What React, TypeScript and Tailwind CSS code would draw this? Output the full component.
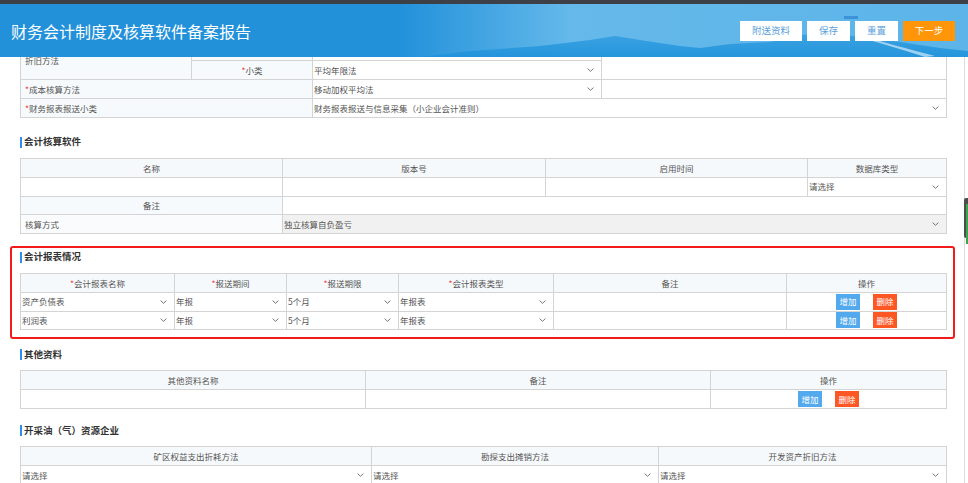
import React from "react";

const Chev = () => (
  <svg width="7" height="4" viewBox="0 0 7 4" className="shrink-0">
    <polyline points="0.6,0.6 3.5,3.3 6.4,0.6" fill="none" stroke="#666" strokeWidth="0.9" />
  </svg>
);

const Star = () => <span className="text-[#f04040]">*</span>;

const base = "border border-[#d4d4d4] p-0 align-middle";
const A = "h-[19px]";
const Bh = "h-[18.75px]";

function Sel({ text, colSpan, gray, h }: { text: string; colSpan?: number; gray?: boolean; h: string }) {
  return (
    <td colSpan={colSpan} className={`${base} ${h} ${gray ? "bg-[#f1f1f1]" : "bg-white"}`}>
      <div className="flex items-center justify-between pl-[1px] pr-[7px] text-[#555]">
        <span>{text}</span>
        <Chev />
      </div>
    </td>
  );
}

function Th({ children, h }: { children?: React.ReactNode; h: string }) {
  return <th className={`${base} ${h} bg-[#f6f9fb] text-center text-[#555] font-normal`}>{children}</th>;
}

function Td({ children, h, className = "bg-white", colSpan, rowSpan }: { children?: React.ReactNode; h: string; className?: string; colSpan?: number; rowSpan?: number }) {
  return (
    <td colSpan={colSpan} rowSpan={rowSpan} className={`${base} ${h} ${className}`}>
      {children}
    </td>
  );
}

function Heading({ title }: { title: string }) {
  return (
    <div className="flex items-center h-[16px] mb-[8px]">
      <span className="w-[2px] h-[11px] bg-[#2b8ef0] mr-[2px]" />
      <span className="font-bold text-[9.5px] text-[#333]">{title}</span>
    </div>
  );
}

function Btns() {
  return (
    <div className="flex justify-center gap-[13px]">
      <span className="w-[24px] h-[16px] flex items-center justify-center bg-[#52a9ee] text-white text-[8.5px]">增加</span>
      <span className="w-[24px] h-[16px] flex items-center justify-center bg-[#ff5724] text-white text-[8.5px]">删除</span>
    </div>
  );
}

function HeaderArt() {
  return (
    <svg className="absolute inset-0" width="968" height="53" viewBox="0 0 968 53" preserveAspectRatio="none">
      <defs>
        <linearGradient id="sky" x1="0" x2="1" y1="0" y2="0">
          <stop offset="0" stopColor="#6cbdec" stopOpacity="0" />
          <stop offset="0.3" stopColor="#6cbdec" stopOpacity="0.9" />
          <stop offset="1" stopColor="#5cb4e8" stopOpacity="1" />
        </linearGradient>
        <linearGradient id="mt" x1="0" x2="0" y1="0" y2="1">
          <stop offset="0" stopColor="#36a0e2" />
          <stop offset="1" stopColor="#1f92da" />
        </linearGradient>
      </defs>
      <rect x="400" y="0" width="568" height="53" fill="url(#sky)" />
      <path d="M420,53 L470,47 L540,42 L590,36 L615,32 L640,36 L680,42 L700,44 L730,40 L770,38 L800,31 L830,29 L860,33 L900,38 L940,44 L968,47 L968,53 Z" fill="url(#mt)" opacity="0.9" />
      <path d="M860,31 C880,37 900,43 935,52 L925,53 C900,45 880,39 858,33 Z" fill="#cfe9f8" opacity="0.7" />
      <rect x="844" y="12" width="14" height="3" fill="#3d93d9" />
    </svg>
  );
}

export default function App() {
  return (
    <div className="relative w-full h-[483px] overflow-hidden bg-white font-['Noto_Sans_CJK_SC','Microsoft_YaHei',sans-serif] text-[8.5px] leading-none">
      <div className="h-[4px] bg-[#3d4046]" />
      <header className="relative h-[53px] bg-[#2291da] flex items-center justify-between pl-[11px] pr-[13px] overflow-hidden">
        <HeaderArt />
        <h1 className="relative text-white text-[16px] leading-none font-normal">财务会计制度及核算软件备案报告</h1>
        <div className="relative flex items-center gap-[5px]">
          <button className="w-[62px] h-[20px] bg-white text-[#5b9fdc] text-[9.5px]">附送资料</button>
          <button className="w-[43px] h-[20px] bg-white text-[#5b9fdc] text-[9.5px]">保存</button>
          <button className="w-[43px] h-[20px] bg-white text-[#5b9fdc] text-[9.5px]">重置</button>
          <button className="w-[52px] h-[20px] bg-[#ff9508] text-white text-[9.5px]">下一步</button>
        </div>
      </header>

      <div className="overflow-hidden">
        <div className="-mt-[16px]">
          {/* top form */}
          <div className="px-[20px]">
            <table className="w-[926px] table-fixed border-collapse">
              <colgroup>
                <col className="w-[171px]" />
                <col className="w-[121px]" />
                <col className="w-[289px]" />
                <col className="w-[345px]" />
              </colgroup>
              <tbody>
                <tr>
                  <Td h={A} rowSpan={2} className="bg-[#f7fafc] text-[#555] pl-[4px]">折旧方法</Td>
                  <Td h={A} className="bg-[#f7fafc]" />
                  <Td h={A} />
                  <Td h={A} rowSpan={2} />
                </tr>
                <tr>
                  <Td h={A} className="bg-[#f7fafc] text-center text-[#555]"><Star />小类</Td>
                  <Sel h={A} text="平均年限法" />
                </tr>
                <tr>
                  <Td h={A} colSpan={2} className="bg-[#f7fafc] text-[#555] pl-[4px]"><Star />成本核算方法</Td>
                  <Sel h={A} text="移动加权平均法" />
                  <Td h={A} />
                </tr>
                <tr>
                  <Td h={A} colSpan={2} className="bg-[#f7fafc] text-[#555] pl-[4px]"><Star />财务报表报送小类</Td>
                  <Sel h={A} text="财务报表报送与信息采集（小企业会计准则）" colSpan={2} />
                </tr>
              </tbody>
            </table>
          </div>

          {/* 会计核算软件 */}
          <section className="px-[20px] pt-[16px]">
            <Heading title="会计核算软件" />
            <table className="w-[926px] table-fixed border-collapse">
              <colgroup>
                <col className="w-[262px]" />
                <col className="w-[263px]" />
                <col className="w-[262px]" />
                <col className="w-[139px]" />
              </colgroup>
              <tbody>
                <tr>
                  <Th h={Bh}>名称</Th>
                  <Th h={Bh}>版本号</Th>
                  <Th h={Bh}>启用时间</Th>
                  <Th h={Bh}>数据库类型</Th>
                </tr>
                <tr>
                  <Td h={Bh} />
                  <Td h={Bh} />
                  <Td h={Bh} />
                  <Sel h={Bh} text="请选择" />
                </tr>
                <tr>
                  <Td h={Bh} className="bg-[#f7fafc] text-center text-[#555]">备注</Td>
                  <Td h={Bh} colSpan={3} />
                </tr>
                <tr>
                  <Td h={Bh} className="bg-[#fafbfc] text-[#555] pl-[4px]">核算方式</Td>
                  <Sel h={Bh} text="独立核算自负盈亏" colSpan={3} gray />
                </tr>
              </tbody>
            </table>
          </section>

          {/* 会计报表情况 */}
          <section className="relative px-[20px] pt-[15px]">
            <div className="absolute top-[12px] -bottom-[9px] left-[10px] right-[13px] border-2 border-[#f21b1b] rounded-[3px] pointer-events-none" />
            <Heading title="会计报表情况" />
            <table className="w-[926px] table-fixed border-collapse">
              <colgroup>
                <col className="w-[154px]" />
                <col className="w-[112px]" />
                <col className="w-[112px]" />
                <col className="w-[155px]" />
                <col className="w-[233px]" />
                <col className="w-[160px]" />
              </colgroup>
              <tbody>
                <tr>
                  <Th h={Bh}><Star />会计报表名称</Th>
                  <Th h={Bh}><Star />报送期间</Th>
                  <Th h={Bh}><Star />报送期限</Th>
                  <Th h={Bh}><Star />会计报表类型</Th>
                  <Th h={Bh}>备注</Th>
                  <Th h={Bh}>操作</Th>
                </tr>
                {["资产负债表", "利润表"].map((n) => (
                  <tr key={n}>
                    <Sel h={Bh} text={n} />
                    <Sel h={Bh} text="年报" />
                    <Sel h={Bh} text="5个月" />
                    <Sel h={Bh} text="年报表" />
                    <Td h={Bh} />
                    <Td h={Bh}><Btns /></Td>
                  </tr>
                ))}
              </tbody>
            </table>
          </section>

          {/* 其他资料 */}
          <section className="px-[20px] pt-[16px]">
            <Heading title="其他资料" />
            <table className="w-[926px] table-fixed border-collapse">
              <colgroup>
                <col className="w-[345px]" />
                <col className="w-[345px]" />
                <col className="w-[236px]" />
              </colgroup>
              <tbody>
                <tr>
                  <Th h={A}>其他资料名称</Th>
                  <Th h={A}>备注</Th>
                  <Th h={A}>操作</Th>
                </tr>
                <tr>
                  <Td h={A} />
                  <Td h={A} />
                  <Td h={A}><Btns /></Td>
                </tr>
              </tbody>
            </table>
          </section>

          {/* 开采油（气）资源企业 */}
          <section className="px-[20px] pt-[13px]">
            <Heading title="开采油（气）资源企业" />
            <table className="w-[926px] table-fixed border-collapse">
              <colgroup>
                <col className="w-[351px]" />
                <col className="w-[287px]" />
                <col className="w-[288px]" />
              </colgroup>
              <tbody>
                <tr>
                  <Th h={A}>矿区权益支出折耗方法</Th>
                  <Th h={A}>勘探支出摊销方法</Th>
                  <Th h={A}>开发资产折旧方法</Th>
                </tr>
                <tr>
                  <Sel h={A} text="请选择" />
                  <Sel h={A} text="请选择" />
                  <Sel h={A} text="请选择" />
                </tr>
              </tbody>
            </table>
          </section>
        </div>
      </div>

      {/* right edge scroll line and side widget */}
      <div className="absolute left-[964px] top-[57px] bottom-0 w-px bg-[#dcdcdc]" />
      <div className="absolute left-[964px] top-[198px] w-[4px] h-[40px] rounded-l-[2px] bg-[#4b4f4b] flex justify-end">
        <div className="w-[2px] h-full bg-[#3aa84a] mt-[6px]" />
      </div>
    </div>
  );
}
